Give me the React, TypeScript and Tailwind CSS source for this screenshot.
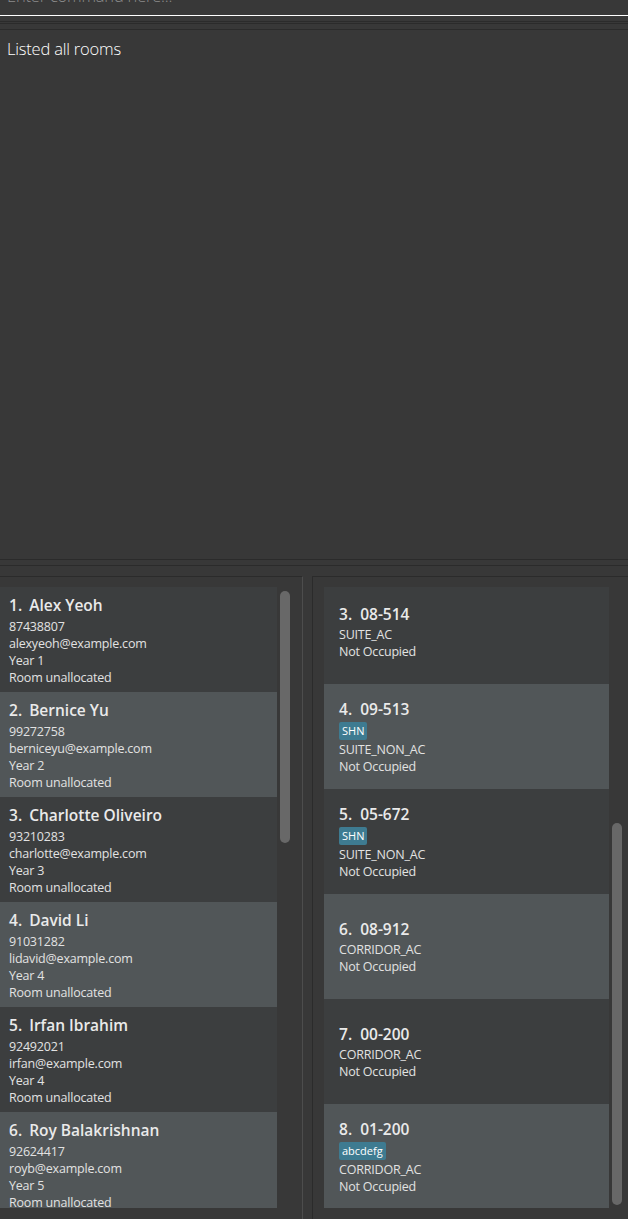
import React from "react";

type Person = {
  name: string;
  phone: string;
  email: string;
  year: string;
  room: string;
};

type Room = {
  no: number;
  number: string;
  tag?: string;
  type: string;
  status: string;
};

const people: Person[] = [
  { name: "Alex Yeoh", phone: "87438807", email: "alexyeoh@example.com", year: "Year 1", room: "Room unallocated" },
  { name: "Bernice Yu", phone: "99272758", email: "berniceyu@example.com", year: "Year 2", room: "Room unallocated" },
  { name: "Charlotte Oliveiro", phone: "93210283", email: "charlotte@example.com", year: "Year 3", room: "Room unallocated" },
  { name: "David Li", phone: "91031282", email: "lidavid@example.com", year: "Year 4", room: "Room unallocated" },
  { name: "Irfan Ibrahim", phone: "92492021", email: "irfan@example.com", year: "Year 4", room: "Room unallocated" },
  { name: "Roy Balakrishnan", phone: "92624417", email: "royb@example.com", year: "Year 5", room: "Room unallocated" },
];

const rooms: Room[] = [
  { no: 3, number: "08-514", type: "SUITE_AC", status: "Not Occupied" },
  { no: 4, number: "09-513", tag: "SHN", type: "SUITE_NON_AC", status: "Not Occupied" },
  { no: 5, number: "05-672", tag: "SHN", type: "SUITE_NON_AC", status: "Not Occupied" },
  { no: 6, number: "08-912", type: "CORRIDOR_AC", status: "Not Occupied" },
  { no: 7, number: "00-200", type: "CORRIDOR_AC", status: "Not Occupied" },
  { no: 8, number: "01-200", tag: "abcdefg", type: "CORRIDOR_AC", status: "Not Occupied" },
];

const font = { fontFamily: '"Open Sans", "Noto Sans", sans-serif' };

const PersonCard = ({ person, index }: { person: Person; index: number }) => (
  <div
    className={`h-[105px] shrink-0 px-[9px] pt-[8px] ${index % 2 === 0 ? "bg-[#3c3e3f]" : "bg-[#515658]"}`}
  >
    <div className="flex h-[21px] items-center text-[15.5px] font-semibold text-[#eaeaea]">
      <span className="whitespace-pre">{index + 1}. </span>
      <span className="ml-[3px]">{person.name}</span>
    </div>
    <div className="mt-[2px] text-[12.5px] leading-[17px] tracking-[-0.2px] text-[#e2e2e2]">
      <div>{person.phone}</div>
      <div>{person.email}</div>
      <div>{person.year}</div>
      <div>{person.room}</div>
    </div>
  </div>
);

const RoomCard = ({ room, index }: { room: Room; index: number }) => (
  <div
    className={`flex h-[105px] shrink-0 flex-col justify-center px-[15px] pt-[1px] ${index % 2 === 0 ? "bg-[#3c3e3f]" : "bg-[#515658]"}`}
  >
    <div className="flex h-[21px] items-center text-[15.5px] font-semibold text-[#eaeaea]">
      <span className="whitespace-pre">{room.no}. </span>
      <span className="ml-[4px]">{room.number}</span>
    </div>
    {/* Tags row */}
    {room.tag && (
      <div className="mt-[1px] flex h-[18px]">
        <span className="rounded-[2px] bg-[#3e7b91] px-[3px] text-[11px] leading-[18px] text-white">
          {room.tag}
        </span>
      </div>
    )}
    <div className="mt-[1px] text-[12.5px] leading-[17px] tracking-[-0.2px] text-[#e2e2e2]">
      <div>{room.type}</div>
      <div>{room.status}</div>
    </div>
  </div>
);

export default function App() {
  return (
    <div className="flex h-[1219px] w-[628px] flex-col overflow-hidden bg-[#383838]" style={font}>
      {/* Command box */}
      <div className="h-[15px] overflow-hidden px-[7px]">
        <div className="mt-[-16px] text-[16.5px] font-light leading-[24px] tracking-[-0.2px] text-[#8c8c8c]">
          Enter command here...
        </div>
      </div>
      <div className="h-px bg-white" />
      <div className="h-[5px]" />
      <div className="h-px bg-[#2b2b2b]" />
      <div className="h-px" />
      <div className="h-px bg-[#2b2b2b]" />
      <div className="h-[5px]" />
      <div className="h-px bg-[#2b2b2b]" />

      {/* Result display */}
      <div className="h-[529px] px-[7px] pt-[7px] text-[16.5px] font-light leading-[24px] tracking-[-0.2px] text-white">
        Listed all rooms
      </div>

      <div className="h-px bg-[#2b2b2b]" />
      <div className="h-[5px]" />
      <div className="h-px bg-[#2b2b2b]" />
      <div className="h-[10px]" />

      {/* Lists */}
      <div className="flex min-h-0 flex-1">
        {/* Person list */}
        <div className="flex w-[303px] flex-col border-t border-r border-t-[#2b2b2b] border-r-[#4d4d4d] pt-[10px]">
          <div className="flex h-[621px]">
            <div className="flex w-[277px] flex-col overflow-hidden">
              {people.map((p, i) => (
                <PersonCard key={p.phone} person={p} index={i} />
              ))}
            </div>
            <div className="ml-[3px] w-[10px] pt-[4px]">
              <div className="h-[252px] rounded-[5px] bg-[#686868]" />
            </div>
          </div>
        </div>

        <div className="w-[9px]" />

        {/* Room list */}
        <div className="flex flex-1 flex-col border-t border-l border-[#2b2b2b] pl-[11px] pt-[10px]">
          <div className="flex h-[621px]">
            <div className="flex w-[285px] flex-col overflow-hidden">
              <div className="h-[97px] shrink-0 overflow-hidden">
                <div className="mt-[-8px]">
                  <RoomCard room={rooms[0]} index={0} />
                </div>
              </div>
              {rooms.slice(1).map((r, i) => (
                <RoomCard key={r.no} room={r} index={i + 1} />
              ))}
            </div>
            <div className="ml-[3px] w-[10px] pt-[236px]">
              <div className="h-[382px] rounded-[5px] bg-[#686868]" />
            </div>
          </div>
        </div>
      </div>
    </div>
  );
}
